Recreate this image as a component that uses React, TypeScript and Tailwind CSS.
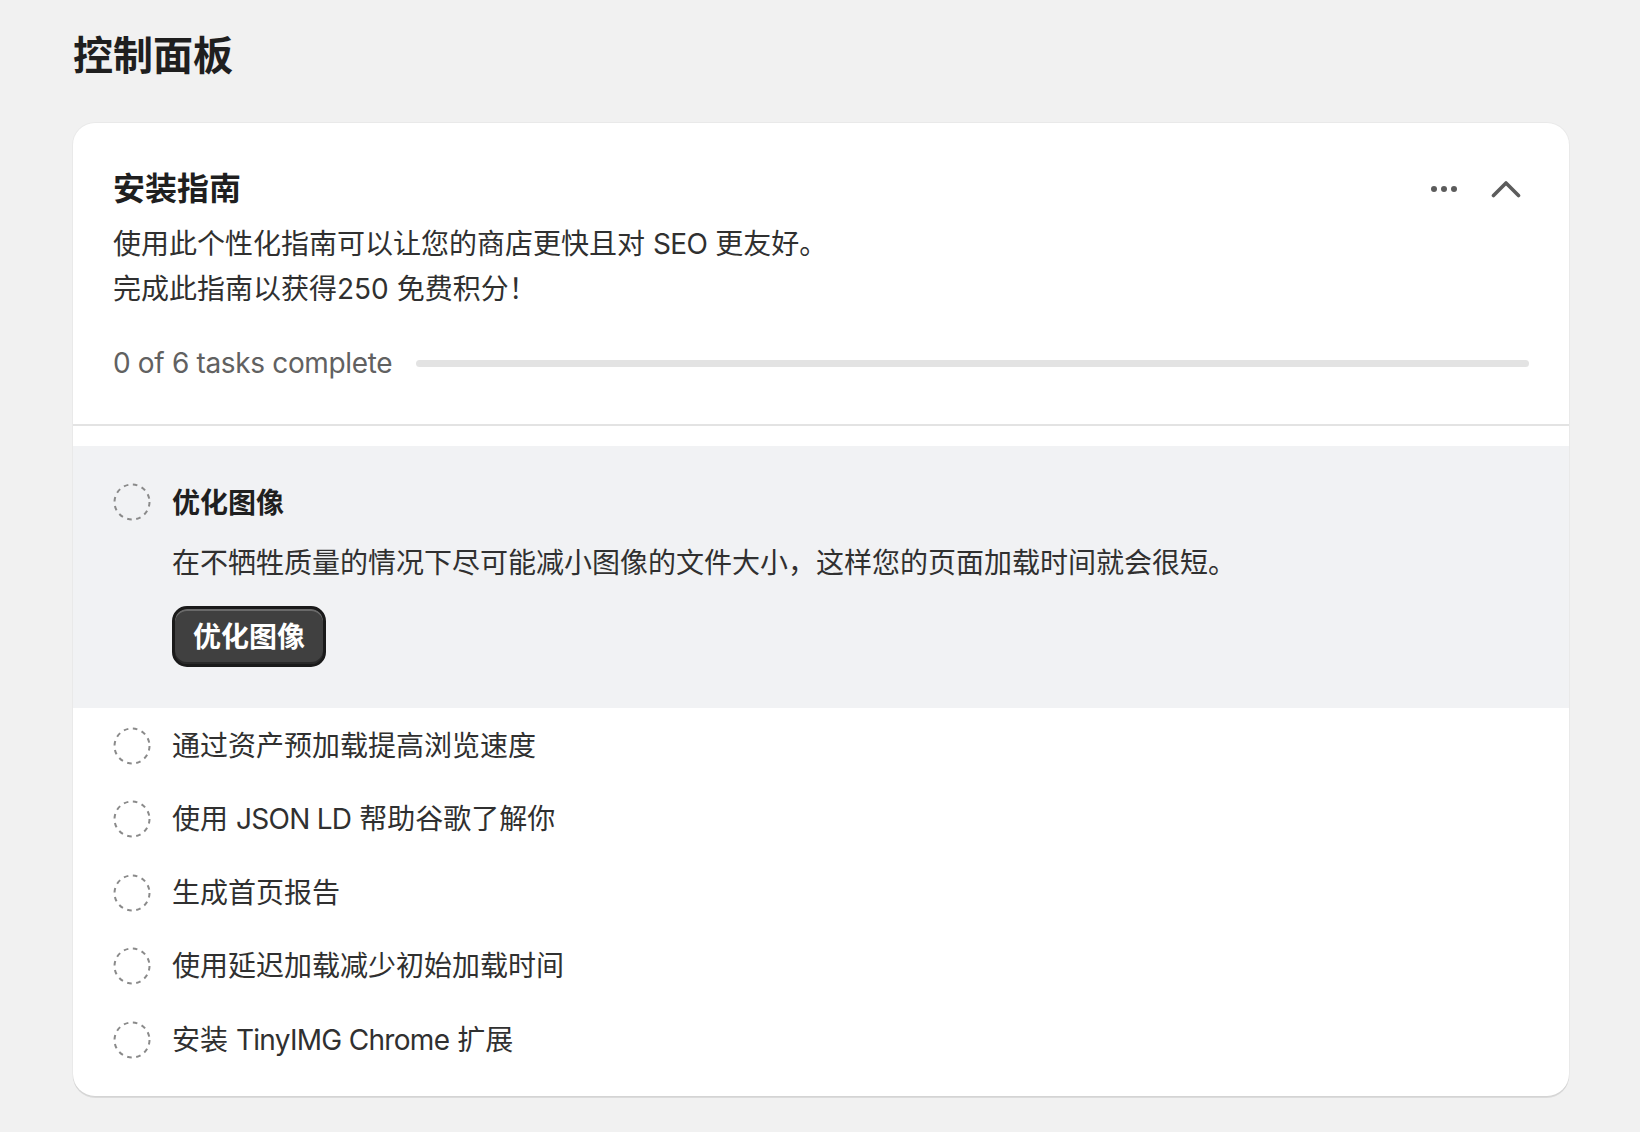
import React from "react";

const font = { fontFamily: '"Inter", "Noto Sans CJK SC", sans-serif' };

// latin runs are wrapped so they can be tightened to match the reference
const tasks: React.ReactNode[] = [
  "通过资产预加载提高浏览速度",
  <>
    使用 <span className="tracking-[-0.025em]">JSON LD</span> 帮助谷歌了解你
  </>,
  "生成首页报告",
  "使用延迟加载减少初始加载时间",
  <>
    安装 <span className="tracking-[-0.025em]">TinyIMG Chrome</span> 扩展
  </>,
];

function DashedCircle() {
  return (
    <svg width="38" height="38" viewBox="0 0 38 38" className="shrink-0">
      <circle
        cx="19"
        cy="19"
        r="17.5"
        fill="none"
        stroke="#8a8a8a"
        strokeWidth="2"
        strokeDasharray="4.6 4.6"
      />
    </svg>
  );
}

function DotsIcon() {
  return (
    <svg width="26" height="6" viewBox="0 0 26 6">
      <circle cx="3" cy="3" r="3" fill="#5c5c5c" />
      <circle cx="13" cy="3" r="3" fill="#5c5c5c" />
      <circle cx="23" cy="3" r="3" fill="#5c5c5c" />
    </svg>
  );
}

function ChevronUp() {
  return (
    <svg width="30" height="18" viewBox="0 0 30 18">
      <polyline
        points="2.5,15.5 15,3 27.5,15.5"
        fill="none"
        stroke="#5c5c5c"
        strokeWidth="3.6"
        strokeLinecap="round"
        strokeLinejoin="round"
      />
    </svg>
  );
}

export default function App() {
  return (
    <div style={font} className="min-h-screen bg-[#f1f1f1] pl-[73px] pr-[71px] pt-[32px] text-[#303030]">
      <h1 className="text-[40px] font-bold leading-[48px] text-[#1f1f1f]">控制面板</h1>

      <div className="mt-[43px] overflow-hidden rounded-[22px] bg-white shadow-[0_2px_0_rgba(0,0,0,0.09),0_0_0_1px_rgba(0,0,0,0.03)]">
        {/* header */}
        <div className="px-[40px] pb-[43px] pt-[44px]">
          <div className="flex items-center justify-between">
            <h2 className="text-[32px] font-bold leading-[44px] text-[#1f1f1f]">安装指南</h2>
            <div className="mr-[5px] flex items-center gap-[26px]">
              <button className="flex h-[36px] w-[36px] items-center justify-center">
                <DotsIcon />
              </button>
              <button className="flex h-[36px] w-[36px] items-center justify-center">
                <ChevronUp />
              </button>
            </div>
          </div>
          <p className="mt-[11px] text-[28px] leading-[45px]">
            使用此个性化指南可以让您的商店更快且对 <span className="tracking-[-0.02em]">SEO</span> 更友好。
            <br />
            完成此指南以获得250 免费积分！
          </p>
          <div className="mt-[33px] flex h-[36px] items-center">
            <span className="text-[28px] leading-[36px] tracking-[-0.012em] text-[#616161]">
              0 of 6 tasks complete
            </span>
            <div className="ml-[24px] h-[7px] flex-1 rounded-full bg-[#e3e3e3]" />
          </div>
        </div>

        <div className="h-[2px] bg-[#e3e3e3]" />

        {/* tasks */}
        <div className="pb-[20px] pt-[20px]">
          <div className="flex gap-[21px] bg-[#f1f2f4] px-[40px] pb-[41px] pt-[37px]">
            <DashedCircle />
            <div>
              <h3 className="text-[28px] font-bold leading-[40px] text-[#1f1f1f]">优化图像</h3>
              <p className="mt-[20px] text-[28px] leading-[40px]">
                在不牺牲质量的情况下尽可能减小图像的文件大小，这样您的页面加载时间就会很短。
              </p>
              <button className="mt-[23px] h-[61px] rounded-[15px] border-[3px] border-[#1a1a1a] bg-[#404040] px-[18px] text-[28px] font-bold leading-none text-white shadow-[inset_0_2px_0_rgba(255,255,255,0.22),inset_0_-2px_0_rgba(0,0,0,0.35)]">
                优化图像
              </button>
            </div>
          </div>

          {tasks.map((t, i) => (
            <div key={i} className="flex h-[73.5px] items-center gap-[21px] px-[40px] pt-[2px]">
              <DashedCircle />
              <span className="text-[28px] leading-[40px]">{t}</span>
            </div>
          ))}
        </div>
      </div>
    </div>
  );
}
